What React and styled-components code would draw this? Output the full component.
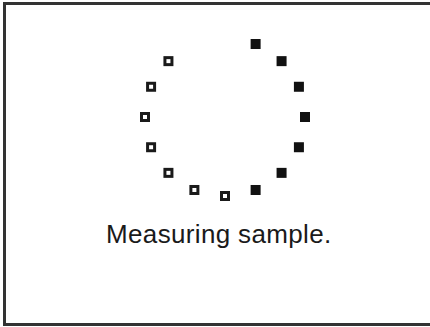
import styled, { createGlobalStyle } from "styled-components";

const GlobalStyle = createGlobalStyle`
  html, body {
    margin: 0;
    padding: 0;
    background: #ffffff;
    overflow: hidden;
  }
`;

const Screen = styled.div`
  width: 430px;
  height: 327px;
  overflow: hidden;
  background: #ffffff;
`;

const Frame = styled.div`
  display: flex;
  flex-direction: column;
  align-items: flex-start;
  box-sizing: border-box;
  margin: 2px 0 0 3px;
  width: 480px;
  height: 324px;
  border: 3px solid #333333;
  padding: 24px 0 0 131px;
`;

const Spinner = styled.svg`
  display: block;
  width: 176px;
  height: 176px;
`;

const Message = styled.div`
  margin: 14px 0 0 -31px;
  font-family: "Liberation Sans", Arial, sans-serif;
  font-size: 26px;
  line-height: 30px;
  letter-spacing: 0.35px;
  color: #1a1a1a;
  white-space: nowrap;
`;

// 16 slots round the ring, the two at the top are gaps
const slots = Array.from({ length: 16 }, (_, i) => i).filter((i) => i !== 0 && i !== 15);

const Dot = ({ index }) => {
  const angle = (index * 22.5 * Math.PI) / 180;
  const cx = 88 + 80 * Math.sin(angle);
  const cy = 88 - 79 * Math.cos(angle);
  const filled = index <= 7;
  if (filled) {
    return <rect x={cx - 5} y={cy - 5} width={10} height={10} fill="#111" />;
  }
  return (
    <rect
      x={cx - 3.5}
      y={cy - 3.5}
      width={7}
      height={7}
      fill="#fff"
      stroke="#1a1a1a"
      strokeWidth={3}
    />
  );
};

export default function App() {
  return (
    <Screen>
      <GlobalStyle />
      <Frame>
        <Spinner viewBox="0 0 176 176">
          {slots.map((i) => (
            <Dot key={i} index={i} />
          ))}
        </Spinner>
        <Message>Measuring sample.</Message>
      </Frame>
    </Screen>
  );
}
